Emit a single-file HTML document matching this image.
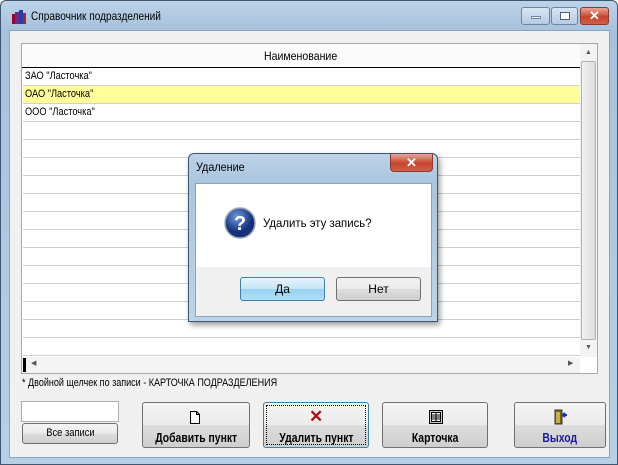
<!DOCTYPE html>
<html><head><meta charset="utf-8"><style>
*{box-sizing:border-box;margin:0;padding:0}
body{width:618px;height:465px;overflow:hidden;font-family:"Liberation Sans",Arial,sans-serif;font-size:11px;background:#fff;position:relative}
.win{position:absolute;left:0;top:0;width:618px;height:465px;border-radius:6px 6px 0 0;background:linear-gradient(#bcd3e8,#a7c2dc 30px,#b7d0e6);border:1px solid #3e5670}
.client{position:absolute;left:8px;top:29px;width:601px;height:428px;background:#f0f0f0;border:1px solid #8ba3bd}
.title{position:absolute;left:30px;top:8px;font-size:12px;color:#000}
.abs{position:absolute}
.n{display:inline-block;transform:scaleX(.84);transform-origin:left center;white-space:nowrap}
.nc{display:inline-block;transform:scaleX(.8);transform-origin:center center;white-space:nowrap}
.cap{position:absolute;top:6px;height:18px;border:1px solid #6d85a1;border-radius:3px;background:linear-gradient(#d9e6f3,#b5cbe2)}
.grid{position:absolute;width:577px;height:331px;background:#fff;border:1px solid #a8a8a8}
.row{position:absolute;left:1px;width:557px;height:18px;border-bottom:1px solid #d0d0d0;padding-left:2px;line-height:17px;font-size:11px}
.btn{position:absolute;border:1px solid #707070;border-radius:3px;background:linear-gradient(#f4f4f4 0,#ebebeb 50%,#dcdcdc 51%,#cfcfcf);text-align:center;font-weight:bold;font-size:13px;white-space:nowrap}
</style></head><body>
<div class="win">
<svg class="abs" style="left:10px;top:8px" width="16" height="16"><rect x="1" y="5" width="3" height="10" fill="#903"/><rect x="4" y="3" width="4" height="12" fill="#6a2a8a"/><rect x="8" y="1" width="4" height="14" fill="#1e3fb0"/><rect x="12" y="4" width="3" height="11" fill="#b02030"/></svg>
<div class="title"><span class="n">Справочник подразделений</span></div>
<div class="cap" style="left:520px;width:29px"><div class="abs" style="left:9px;top:8px;width:10px;height:3px;background:#fff;border:1px solid #6d85a1"></div></div>
<div class="cap" style="left:550px;width:27px"><div class="abs" style="left:8px;top:4px;width:10px;height:8px;border:1px solid #4a5f78;background:#fff"></div></div>
<div class="cap" style="left:579px;width:29px;background:linear-gradient(#e8a598,#c8442c 55%,#d0604a);border-color:#8a3a2e;color:#fff;text-align:center;font-weight:bold;font-size:13px;line-height:16px">✕</div>
<div class="client">
<div class="grid" style="left:11px;top:12px">
 <div class="abs" style="left:0;top:0;width:558px;height:24px;background:#fbfbfb;border-bottom:1px solid #000;text-align:center;line-height:24px;font-size:12px"><span class="nc" style="transform:scaleX(.88)">Наименование</span></div>
 <div class="row" style="top:24px"><span class="n">ЗАО "Ласточка"</span></div>
 <div class="row" style="top:42px;background:#ffff99"><span class="n">ОАО "Ласточка"</span></div>
 <div class="row" style="top:60px"><span class="n">ООО "Ласточка"</span></div>
 <div class="row" style="top:78px"></div><div class="row" style="top:96px"></div><div class="row" style="top:114px"></div><div class="row" style="top:132px"></div><div class="row" style="top:150px"></div><div class="row" style="top:168px"></div><div class="row" style="top:186px"></div><div class="row" style="top:204px"></div><div class="row" style="top:222px"></div><div class="row" style="top:240px"></div><div class="row" style="top:258px"></div><div class="row" style="top:276px"></div><div class="row" style="top:294px"></div>
 <div class="abs" style="left:558px;top:0;width:17px;height:313px;background:#f3f3f3"><div class="abs" style="left:5px;top:5px;font-size:7px;color:#555">▲</div><div class="abs" style="left:1px;top:17px;width:15px;height:279px;border:1px solid #b0b0b0;border-radius:2px;background:linear-gradient(90deg,#f2f2f2,#dcdcdc)"></div><div class="abs" style="left:5px;top:300px;font-size:7px;color:#555">▼</div></div>
 <div class="abs" style="left:0;top:313px;width:558px;height:16px;background:#f3f3f3"><div class="abs" style="left:1px;top:1px;width:3px;height:14px;background:#000"></div><div class="abs" style="left:9px;top:2px;font-size:7px;color:#555">◀</div><div class="abs" style="left:546px;top:2px;font-size:7px;color:#555">▶</div></div>
</div>
<div class="abs" style="left:12px;top:346px;font-size:11px"><span class="n" style="transform:scaleX(.82)">* Двойной щелчек по записи - КАРТОЧКА ПОДРАЗДЕЛЕНИЯ</span></div>
<div class="abs" style="left:11px;top:370px;width:98px;height:21px;background:#fff;border:1px solid #abadb3"></div>
<div class="btn" style="left:12px;top:392px;width:96px;height:21px;font-weight:normal;font-size:11px;line-height:19px"><span class="nc" style="transform:scaleX(.85)">Все записи</span></div>
<div class="btn" style="left:132px;top:371px;width:108px;height:46px;padding-top:27px"><span class="nc">Добавить пункт</span><svg class="abs" style="left:47px;top:8px" width="11" height="13"><path d="M.5 .5h6l3 3v9h-9z M6.5 .5v3h3" fill="#fff" stroke="#000"/></svg></div>
<div class="btn" style="left:253px;top:371px;width:106px;height:46px;padding-top:27px;border-color:#3c7fb1;outline:1px dotted #000;outline-offset:-4px"><span class="nc">Удалить пункт</span><div class="abs" style="left:45px;top:4px;color:#b01010;font-size:17px;font-weight:bold">✕</div></div>
<div class="btn" style="left:372px;top:371px;width:106px;height:46px;padding-top:27px"><span class="nc">Карточка</span><svg class="abs" style="left:46px;top:7px" width="14" height="14"><rect x=".5" y=".5" width="13" height="13" fill="#ccc" stroke="#000"/><rect x="2.5" y="2.5" width="9" height="9" fill="#fff" stroke="#000"/><path d="M3 5h8M3 7h8M3 9h8M7 3v8" stroke="#000"/></svg></div>
<div class="btn" style="left:504px;top:371px;width:92px;height:46px;padding-top:27px;color:#1a1aa0"><span class="nc">Выход</span><svg class="abs" style="left:38px;top:6px" width="16" height="16"><rect x="2" y="1" width="7" height="14" fill="#7a6a20" stroke="#333"/><rect x="3" y="3" width="4" height="11" fill="#c8b040"/><path d="M10 6h4M10 6l2-2M10 6l2 2" stroke="#1030c0" stroke-width="2"/></svg></div>
</div>
</div>
<!-- dialog -->
<div class="abs" style="left:188px;top:153px;width:250px;height:169px;border:1px solid #3e5670;border-radius:6px 6px 0 0;background:linear-gradient(#bcd3e8,#aac5de 30px,#bcd4e9);box-shadow:2px 3px 6px rgba(0,0,0,.4)">
 <div class="abs" style="left:7px;top:6px;font-size:12px"><span class="n" style="transform:scaleX(.9)">Удаление</span></div>
 <div class="abs" style="left:201px;top:0;width:43px;height:18px;border:1px solid #8a3a2e;border-top:none;border-radius:0 0 4px 4px;background:linear-gradient(#e8a598,#c8442c 55%,#d0604a);color:#fff;text-align:center;font-weight:bold;font-size:13px;line-height:17px">✕</div>
 <div class="abs" style="left:6px;top:29px;width:237px;height:134px;background:#f0f0f0;border:1px solid #8ba3bd">
  <div class="abs" style="left:0;top:0;width:235px;height:83px;background:#fff"></div>
  <svg class="abs" style="left:28px;top:23px" width="32" height="32"><defs><radialGradient id="g" cx="40%" cy="30%"><stop offset="0" stop-color="#6f9be0"/><stop offset="1" stop-color="#13317a"/></radialGradient></defs><circle cx="16" cy="16" r="15" fill="url(#g)" stroke="#a0a8b8" stroke-width="1.5"/><text x="16" y="23" text-anchor="middle" font-family="Liberation Sans" font-weight="bold" font-size="20" fill="#fff">?</text></svg>
  <div class="abs" style="left:67px;top:32px;font-size:12px"><span class="n" style="transform:scaleX(.95)">Удалить эту запись?</span></div>
  <div class="abs" style="left:44px;top:93px;width:85px;height:24px;border:1px solid #3c7fb1;border-radius:3px;background:linear-gradient(#e5f4fc,#c4e5f6 50%,#98d1ef 51%,#b0dff5);text-align:center;line-height:22px;font-size:12px">Да</div>
  <div class="abs" style="left:140px;top:93px;width:85px;height:24px;border:1px solid #707070;border-radius:3px;background:linear-gradient(#f2f2f2,#ebebeb 50%,#dddddd 51%,#cfcfcf);text-align:center;line-height:22px;font-size:12px">Нет</div>
 </div>
</div>
</body></html>
